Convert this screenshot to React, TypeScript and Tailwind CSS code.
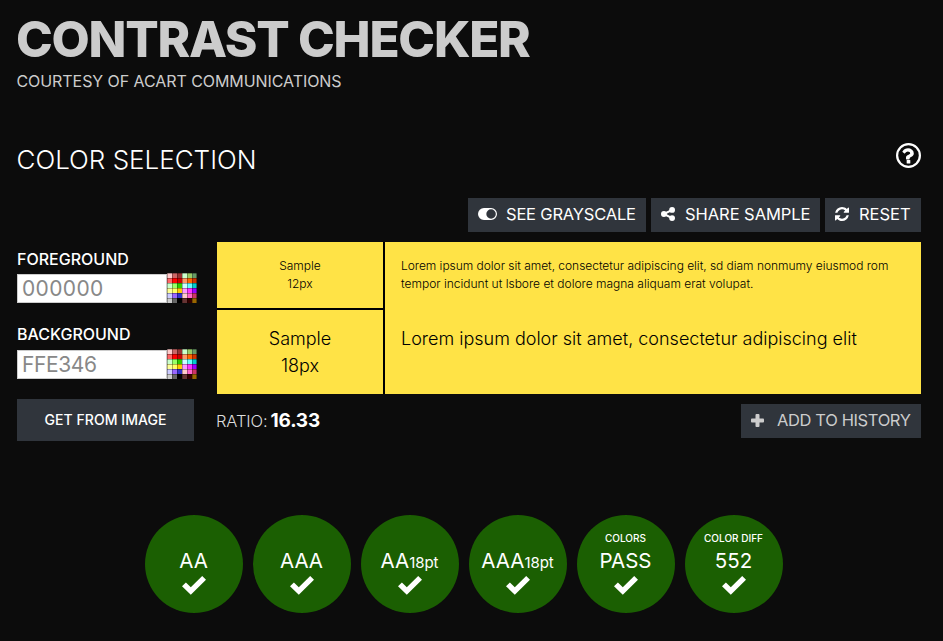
import React from "react";

const SWATCHES = [
  "#ffcccc", "#cc6666", "#993333", "#ccffcc", "#99cc66", "#669966",
  "#ff6666", "#ff0000", "#cc0000", "#ff9966", "#ff6600", "#cc3300",
  "#ccffcc", "#99ff66", "#33cc00", "#ccffff", "#66ffff", "#00cccc",
  "#ffff99", "#ffff66", "#ffcc00", "#ff99ff", "#ff33ff", "#9900ff",
  "#ccccff", "#9966ff", "#3333cc", "#ffcccc", "#ff66cc", "#cc3366",
  "#cccccc", "#666666", "#000000", "#663333", "#330000", "#996600",
];

function Palette() {
  return (
    <svg width="30" height="30" viewBox="0 0 30 30" shapeRendering="crispEdges" className="shrink-0">
      {SWATCHES.map((fill, i) => (
        <rect key={i} x={(i % 6) * 5} y={Math.floor(i / 6) * 5} width="5" height="5" fill={fill} />
      ))}
      {[0, 5, 10, 15, 20, 25].map((p) => (
        <g key={p} fill="#000" fillOpacity="0.3">
          <rect x={p} y="0" width="1" height="30" />
          <rect x="0" y={p} width="30" height="1" />
        </g>
      ))}
      <rect x="29" y="0" width="1" height="30" fill="#000" fillOpacity="0.4" />
    </svg>
  );
}

function ToggleIcon() {
  return (
    <svg width="19" height="12" viewBox="0 0 2048 1280" className="mr-[9px] shrink-0" fill="currentColor" fillRule="evenodd">
      <path d="M640 0H1408A640 640 0 0 1 1408 1280H640A640 640 0 0 1 640 0ZM1408 128A512 512 0 0 0 1408 1152A512 512 0 0 0 1408 128Z" />
    </svg>
  );
}

function ShareIcon() {
  return (
    <svg width="14" height="14" viewBox="0 0 1536 1536" className="mr-[10px] ml-[1px] shrink-0" fill="currentColor">
      <path d="M1216 320 320 768 1216 1216" fill="none" stroke="currentColor" strokeWidth="230" />
      <circle cx="1216" cy="320" r="320" />
      <circle cx="320" cy="768" r="320" />
      <circle cx="1216" cy="1216" r="320" />
    </svg>
  );
}

function RefreshIcon() {
  return (
    <svg width="14" height="14" viewBox="0 0 1536 1536" className="mr-[10px] shrink-0" fill="currentColor">
      <path d="M1511 928q0 5-1 7-64 268-268 434.500t-478 166.500q-146 0-282.500-55t-243.500-157l-129 129q-19 19-45 19t-45-19-19-45v-448q0-26 19-45t45-19h448q26 0 45 19t19 45-19 45l-137 137q71 66 161 102t187 36q134 0 250-65t186-179q11-17 53-117 8-23 30-23h192q13 0 22.500 9.500t9.500 22.500zm25-800v448q0 26-19 45t-45 19h-448q-26 0-45-19t-19-45 19-45l138-138q-148-137-349-137-134 0-250 65t-186 179q-11 17-53 117-8 23-30 23h-199q-13 0-22.500-9.500t-9.500-22.500v-7q65-268 270-434.500t480-166.500q146 0 284 55.500t245 156.500l130-129q19-19 45-19t45 19 19 45z" />
    </svg>
  );
}

function PlusIcon() {
  return (
    <svg width="13" height="13" viewBox="0 0 13 13" className="mr-[13px] shrink-0" fill="currentColor">
      <rect x="4.500" y="0" width="4" height="13" rx="0.900" />
      <rect x="0" y="4.500" width="13" height="4" rx="0.900" />
    </svg>
  );
}

function HelpIcon() {
  return (
    <svg width="25" height="25" viewBox="0 0 1536 1536" className="mb-[7px] shrink-0" fill="currentColor">
      <circle cx="768" cy="768" r="700" fill="none" stroke="currentColor" strokeWidth="136" />
      <path d="M880 1072v160q0 14-9 23t-23 9h-160q-14 0-23-9t-9-23v-160q0-14 9-23t23-9h160q14 0 23 9t9 23zm213-444q0 50-15 90t-45.500 69-52 44-59.500 36q-32 18-46.500 28t-26 24-11.500 29v32q0 14-9 23t-23 9h-160q-14 0-23-9t-9-23v-68q0-35 10.500-64.500t24-47.500 39-35.500 41-25.500 44.500-21q53-25 75-43t22-49q0-42-43.500-71.500t-95.500-29.500q-56 0-95 27-29 20-80 83-9 12-25 12-11 0-19-6l-108-82q-10-7-12-20t5-23q122-192 349-192 129 0 238.500 89.500t109.500 214.500z" />
    </svg>
  );
}

function Field({ label, value, labelClass, valueClass }: { label: string; value: string; labelClass: string; valueClass: string }) {
  return (
    <div>
      <div className={"h-[31px] text-[16px] leading-[20px] font-medium whitespace-nowrap text-white " + labelClass}>{label}</div>
      <div className="flex h-[30px] items-end">
        <div className={"h-[29px] w-[150px] border border-[#ccc] bg-white pl-[4px] text-[21px] leading-[27px] font-normal text-[#888] " + valueClass}>{value}</div>
        <Palette />
      </div>
    </div>
  );
}

function Check() {
  return (
    <svg width="24" height="19" viewBox="0 0 24 19" className="mt-[3px]">
      <path d="M0 10.2 3.9 6.4 8.8 11.2 20.2 0 24 3.8 8.8 18.8Z" fill="#fff" />
    </svg>
  );
}

function Badge({ top, main, small }: { top?: string; main: string; small?: string }) {
  return (
    <div className="flex h-[98px] w-[98px] flex-col items-center rounded-full bg-[#1b5f02] pt-[16px] pr-[1px] whitespace-nowrap text-white">
      <div className="h-[14px] text-[10px] leading-[14px] font-medium">{top}</div>
      <div className="mt-[3px] h-[25px] text-[20.5px] leading-[25px] tracking-[0px]">
        {main}
        {small && <span className="text-[15px] tracking-[-0.050px]">{small}</span>}
      </div>
      <Check />
    </div>
  );
}

export default function App() {
  return (
    <div className="h-[641px] w-[943px] overflow-hidden bg-[#0c0c0c] pl-[17px] font-['Inter','Liberation_Sans',sans-serif] text-white">
      <h1 className="pt-[9px] text-[49.5px] leading-[60px] font-extrabold whitespace-nowrap text-[#ccc]">
        <span className="-ml-[1px] tracking-[-1.250px]">CONTRAST CHECKER</span>
      </h1>
      <p className="text-[16px] leading-[24px] whitespace-nowrap text-[#ccc]">
        <span className="-ml-[0.5px] tracking-[-0.070px]">COURTESY OF ACART COMMUNICATIONS</span>
      </p>

      <div className="mt-[46px] flex h-[40px] w-[904px] items-center justify-between">
        <h2 className="pt-[2px] text-[26px] leading-[40px] font-light whitespace-nowrap">
          <span className="-ml-[0.5px] tracking-[0px]">COLOR SELECTION</span>
        </h2>
        <HelpIcon />
      </div>

      <div className="mt-[19px] flex h-[34px] w-[904px] justify-end gap-[5px] text-[16.5px] leading-[32px] whitespace-nowrap">
        <div className="flex w-[178px] items-center bg-[#30353c] pb-[2px] pl-[10px]">
          <ToggleIcon />
          <span className="tracking-[-0.190px]">SEE GRAYSCALE</span>
        </div>
        <div className="flex w-[169px] items-center bg-[#30353c] pb-[2px] pl-[9px]">
          <ShareIcon />
          <span className="tracking-[-0.050px]">SHARE SAMPLE</span>
        </div>
        <div className="flex w-[96px] items-center bg-[#30353c] pb-[2px] pl-[10px]">
          <RefreshIcon />
          <span className="tracking-[0px]">RESET</span>
        </div>
      </div>

      <div className="mt-[10px] flex">
        <div className="w-[200px]">
          <Field label="FOREGROUND" value="000000" labelClass="pt-[7px] tracking-[0px]" valueClass="tracking-[0.350px]" />
          <div className="h-[15px]" />
          <Field label="BACKGROUND" value="FFE346" labelClass="pt-[6px] tracking-[0px]" valueClass="tracking-[-0.400px]" />
          <div className="mt-[20px] flex h-[42px] w-[177px] items-center justify-center bg-[#30353c] pb-[2px] text-[14px] font-medium whitespace-nowrap">
            <span className="tracking-[0.050px]">GET FROM IMAGE</span>
          </div>
        </div>

        <div className="w-[704px]">
          <div className="flex h-[152px] gap-[2px] bg-black text-black">
            <div className="flex w-[166px] flex-col gap-[2px] text-center font-light">
              <div className="h-[66px] bg-[#ffe346] pt-[15px] text-[12px] leading-[18px]">
                <div>Sample</div>
                <div>12px</div>
              </div>
              <div className="h-[84px] bg-[#ffe346] pt-[15px] text-[18px] leading-[27px]">
                <div>Sample</div>
                <div>18px</div>
              </div>
            </div>
            <div className="w-[536px] bg-[#ffe346] pt-[15px] pl-[16px] font-light whitespace-nowrap">
              <div className="text-[12px] leading-[18px]">
                <div><span className="tracking-[-0.030px]">Lorem ipsum dolor sit amet, consectetur adipiscing elit, sd diam nonmumy eiusmod rom</span></div>
                <div><span className="tracking-[0px]">tempor incidunt ut lsbore et dolore magna aliquam erat volupat.</span></div>
              </div>
              <div className="mt-[32px] text-[18px] leading-[27px]">
                <span className="tracking-[0px]">Lorem ipsum dolor sit amet, consectetur adipiscing elit</span>
              </div>
            </div>
          </div>
          <div className="mt-[10px] flex h-[34px] items-center justify-between whitespace-nowrap">
            <div className="-ml-px flex items-baseline gap-[3px]">
              <span className="text-[16.5px] font-light tracking-[-0.100px] text-[#ddd]">RATIO:</span>
              <span className="text-[19px] leading-[24px] font-bold tracking-[-0.200px]">16.33</span>
            </div>
            <div className="flex h-[34px] w-[180px] items-center bg-[#30353c] pb-[2px] pl-[10px] text-[16.5px] text-[#ccc]">
              <PlusIcon />
              <span className="tracking-[-0.370px]">ADD TO HISTORY</span>
            </div>
          </div>
        </div>
      </div>

      <div className="mt-[74px] ml-[128px] flex gap-[10px]">
        <Badge main="AA" />
        <Badge main="AAA" />
        <Badge main="AA" small="18pt" />
        <Badge main="AAA" small="18pt" />
        <Badge top="COLORS" main="PASS" />
        <Badge top="COLOR DIFF" main="552" />
      </div>
    </div>
  );
}
